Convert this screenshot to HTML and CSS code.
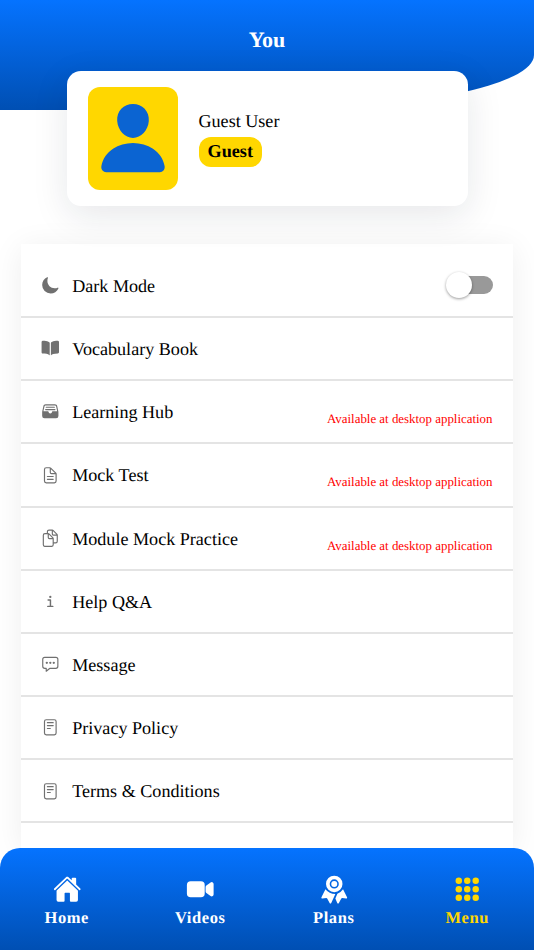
FILE: index.html
```html
<!DOCTYPE html>
<html lang="en">
<head>
<meta charset="utf-8">
<meta name="viewport" content="width=device-width, initial-scale=1">
<title>You</title>
<link rel="stylesheet" href="styles.css">
</head>
<body>
<div class="app">
  <header class="header"><h1 class="title">You</h1></header>
  <section class="profile">
    <div class="avatar">
      <svg viewBox="0 0 512 512"><path d="M332.64 64.58C313.18 43.57 286 32 256 32c-30.16 0-57.43 11.5-76.8 32.38-19.58 21.11-29.12 49.8-26.88 80.78C156.76 206.28 203.27 256 256 256s99.16-49.71 103.67-110.82c2.27-30.7-7.33-59.33-27.03-80.6zM432 480H80a31 31 0 0 1-24.2-11.13c-6.5-7.77-9.12-18.38-7.18-29.11C57.06 392.94 83.4 353.61 124.8 326c36.78-24.51 83.37-38 131.2-38s94.42 13.5 131.2 38c41.4 27.6 67.74 66.93 76.18 113.75 1.94 10.73-.68 21.34-7.18 29.11A31 31 0 0 1 432 480z"/></svg>
    </div>
    <div class="who">
      <div class="name">Guest User</div>
      <div class="badge">Guest</div>
    </div>
  </section>
  <main class="list">
    <div class="row">
      <svg class="icon" viewBox="0 0 512 512"><path d="M264 480A232 232 0 0 1 32 248c0-94 54-178.28 137.61-214.67a16 16 0 0 1 21.06 21.06C181.07 76.43 176 104.66 176 136c0 110.28 89.72 200 200 200 31.34 0 59.57-5.07 81.61-14.67a16 16 0 0 1 21.06 21.06C442.28 426 358 480 264 480Z"/></svg>
      <span class="label">Dark Mode</span>
      <span class="switch"><span class="knob"></span></span>
    </div>
    <div class="row">
      <svg class="icon" viewBox="0 0 512 512"><path d="M202.24 74C166.11 56.75 115.61 48.3 48 48a31.36 31.36 0 0 0-17.92 5.33A32 32 0 0 0 16 79.9V366c0 19.34 13.76 33.93 32 33.93 71.07 0 142.36 6.64 185.06 47a4.11 4.11 0 0 0 6.94-3V106.82a15.89 15.89 0 0 0-5.46-12A143 143 0 0 0 202.24 74Zm279.68-20.7A31.33 31.33 0 0 0 464 48c-67.61.3-118.11 8.71-154.24 26a143.31 143.31 0 0 0-32.31 20.78 15.93 15.93 0 0 0-5.45 12v337.13a3.93 3.93 0 0 0 6.68 2.81c25.67-25.5 70.72-46.82 185.36-46.81a32 32 0 0 0 32-32v-288a32 32 0 0 0-14.12-26.61Z"/></svg>
      <span class="label">Vocabulary Book</span>
    </div>
    <div class="row">
      <svg class="icon" viewBox="0 0 512 512"><path d="M479.66 268.7l-32-151.81C441.48 83.77 417.68 64 384 64H128c-16.8 0-31 4.69-42.1 13.94s-18.37 22.31-21.58 38.89l-32 151.87A16.65 16.65 0 0 0 32 272v112a64 64 0 0 0 64 64h320a64 64 0 0 0 64-64V272a16.65 16.65 0 0 0-.34-3.3Zm-384-145.4v-.28c3.55-18.43 13.81-27 32.29-27H384c18.61 0 28.87 8.55 32.27 26.91 0 .13.05.26.07.39l26.93 127.88a4 4 0 0 1-3.92 4.82H320a15.92 15.92 0 0 0-16 15.82 48 48 0 1 1-96 0A15.92 15.92 0 0 0 192 256H72.65a4 4 0 0 1-3.92-4.82ZM368 160H144a16 16 0 0 1 0-32h224a16 16 0 0 1 0 32Zm16 64H128a16 16 0 0 1 0-32h256a16 16 0 0 1 0 32Z"/></svg>
      <span class="label">Learning Hub</span>
      <span class="note">Available at desktop application</span>
    </div>
    <div class="row">
      <svg class="icon line" viewBox="0 0 512 512"><path d="M416 221.25V416a48 48 0 0 1-48 48H144a48 48 0 0 1-48-48V96a48 48 0 0 1 48-48h98.75a32 32 0 0 1 22.62 9.37l141.26 141.26a32 32 0 0 1 9.37 22.62zM256 56v120a32 32 0 0 0 32 32h120M176 288h160M176 368h160"/></svg>
      <span class="label">Mock Test</span>
      <span class="note">Available at desktop application</span>
    </div>
    <div class="row">
      <svg class="icon line" viewBox="0 0 512 512"><path d="M336 264.13V436c0 24.3-19.05 44-42.95 44H107c-23.95 0-43-19.7-43-44V172a44.26 44.26 0 0 1 44-44h94.12a24.55 24.55 0 0 1 17.49 7.36l109.15 111a25.4 25.4 0 0 1 7.24 17.77zM200 128v108a28.34 28.34 0 0 0 28 28h108M176 128V76a44.26 44.26 0 0 1 44-44h94a24.83 24.83 0 0 1 17.61 7.36l109.15 111A25.09 25.09 0 0 1 448 168v172c0 24.3-19.05 44-42.95 44H344M312 32v108a28.34 28.34 0 0 0 28 28h108"/></svg>
      <span class="label">Module Mock Practice</span>
      <span class="note">Available at desktop application</span>
    </div>
    <div class="row">
      <svg class="icon line info" viewBox="0 0 512 512"><path d="M196 220h64v172M187 396h138"/><circle class="dot" cx="256" cy="136" r="32"/></svg>
      <span class="label">Help Q&amp;A</span>
    </div>
    <div class="row">
      <svg class="icon line" viewBox="0 0 512 512"><path d="M408 64H104a56.16 56.16 0 0 0-56 56v192a56.16 56.16 0 0 0 56 56h40v80l93.72-78.14a8 8 0 0 1 5.13-1.86H408a56.16 56.16 0 0 0 56-56V120a56.16 56.16 0 0 0-56-56z"/><circle class="dot" cx="160" cy="216" r="32"/><circle class="dot" cx="256" cy="216" r="32"/><circle class="dot" cx="352" cy="216" r="32"/></svg>
      <span class="label">Message</span>
    </div>
    <div class="row">
      <svg class="icon line" viewBox="0 0 512 512"><rect x="96" y="48" width="320" height="416" rx="48"/><path d="M176 128h160M176 208h160M176 288h80"/></svg>
      <span class="label">Privacy Policy</span>
    </div>
    <div class="row">
      <svg class="icon line" viewBox="0 0 512 512"><rect x="96" y="48" width="320" height="416" rx="48"/><path d="M176 128h160M176 208h160M176 288h80"/></svg>
      <span class="label">Terms &amp; Conditions</span>
    </div>
  </main>
  <nav class="nav">
    <a class="tab">
      <svg viewBox="0 0 512 512"><path d="M261.56 101.28a8 8 0 0 0-11.06 0L66.4 277.15a8 8 0 0 0-2.47 5.79L63.9 448a32 32 0 0 0 32 32H192a16 16 0 0 0 16-16V328a8 8 0 0 1 8-8h80a8 8 0 0 1 8 8v136a16 16 0 0 0 16 16h96.06a32 32 0 0 0 32-32V282.94a8 8 0 0 0-2.47-5.79Z"/><path d="m490.91 244.15-74.8-71.56V64a16 16 0 0 0-16-16h-48a16 16 0 0 0-16 16v32l-57.92-55.38C272.77 35.14 264.71 32 256 32c-8.68 0-16.72 3.14-22.14 8.63l-212.7 203.5c-6.22 6-7 15.87-1.34 22.37A16 16 0 0 0 43 267.56L250.5 69.28a8 8 0 0 1 11.06 0l207.52 198.28a16 16 0 0 0 22.59-.44c6.14-6.36 5.63-16.86-.76-22.97Z"/></svg>
      <span>Home</span>
    </a>
    <a class="tab">
      <svg viewBox="0 0 512 512"><path d="M464 384.39a32 32 0 0 1-13-2.77 15.77 15.77 0 0 1-2.71-1.54l-82.71-58.22A32 32 0 0 1 352 295.7v-79.4a32 32 0 0 1 13.58-26.16l82.71-58.22a15.77 15.77 0 0 1 2.71-1.54 32 32 0 0 1 45 29.24v192.76a32 32 0 0 1-32 32zM268 400H84a68.07 68.07 0 0 1-68-68V180a68.07 68.07 0 0 1 68-68h184.48A67.6 67.6 0 0 1 336 179.52V332a68.07 68.07 0 0 1-68 68z"/></svg>
      <span>Videos</span>
    </a>
    <a class="tab">
      <svg viewBox="0 0 512 512"><circle cx="256" cy="160" r="54"/><path fill-rule="evenodd" d="M256 12a148 148 0 1 0 0 296a148 148 0 1 0 0-296zM256 78a82 82 0 1 1 0 164a82 82 0 1 1 0-164z"/><path d="M98 256L26 400a16 16 0 0 0 16 23l72-9a16 16 0 0 1 15 8l44 80a16 16 0 0 0 29 0L276 342Q164 340 98 256zM414 256l72 144a16 16 0 0 1-16 23l-72-9a16 16 0 0 0-15 8l-44 80a16 16 0 0 1-29 0L276 420L312 337Q372 316 414 256z"/></svg>
      <span>Plans</span>
    </a>
    <a class="tab active">
      <svg viewBox="0 0 512 512"><circle cx="104" cy="104" r="58"/><circle cx="256" cy="104" r="58"/><circle cx="408" cy="104" r="58"/><circle cx="104" cy="256" r="58"/><circle cx="256" cy="256" r="58"/><circle cx="408" cy="256" r="58"/><circle cx="104" cy="408" r="58"/><circle cx="256" cy="408" r="58"/><circle cx="408" cy="408" r="58"/></svg>
      <span>Menu</span>
    </a>
  </nav>
</div>
</body>
</html>
```
FILE: styles.css
```css
* { box-sizing: border-box; }
body {
  margin: 0;
  background: #fff;
  color: #000;
  font-family: "Liberation Serif", "Times New Roman", serif;
  text-rendering: geometricPrecision;
}
svg { display: block; }
.app {
  height: 950px;
  overflow: hidden;
  display: flex;
  flex-direction: column;
}
.header {
  flex: none;
  height: 110px;
  padding-top: 27px;
  background: linear-gradient(#0573ff, #004fb3);
  border-bottom-right-radius: 50%;
}
.title {
  margin: 0;
  color: #fff;
  font-size: 22px;
  line-height: 25px;
  text-align: center;
}
.profile {
  position: relative;
  flex: none;
  width: 401px;
  height: 134.5px;
  margin: -39px 66px 0 67px;
  padding: 0 21px;
  display: flex;
  align-items: center;
  gap: 20.5px;
  background: #fff;
  border-radius: 14px;
  box-shadow: 0 10px 36px rgba(20, 30, 50, 0.1);
}
.profile::after {
  content: "";
  position: absolute;
  top: 13px;
  right: 0;
  width: 14px;
  height: 100px;
  background: #fff;
}
.avatar {
  width: 90px;
  height: 103px;
  display: flex;
  align-items: center;
  justify-content: center;
  background: #ffd700;
  border-radius: 12px;
}
.avatar svg { width: 78px; height: 78px; fill: #0b64d2; }
.who { display: flex; flex-direction: column; align-items: flex-start; gap: 5px; }
.name { font-size: 18.1px; line-height: 22px; }
.badge {
  padding: 0 9px;
  background: #ffd700;
  border-radius: 12px;
  font-size: 18.2px;
  font-weight: bold;
  line-height: 29.5px;
}
.list {
  flex: 1;
  min-height: 0;
  margin: 38.5px 21px 0;
  padding-top: 10.8px;
  background: #fff;
  box-shadow: 0 4px 30px rgba(0, 0, 0, 0.07);
}
.row {
  height: 63.2px;
  padding: 0 20.5px 0 20px;
  display: flex;
  align-items: center;
  border-bottom: 2px solid #e4e4e4;
}
.icon { width: 18.6px; height: 18.6px; margin-right: 12.6px; fill: #707070; }
.line { fill: none; stroke: #707070; stroke-width: 32; stroke-linecap: round; stroke-linejoin: round; }
.info { stroke-width: 40; }
.dot { fill: #707070; stroke: none; }
.label { font-size: 18.1px; line-height: 22px; padding-top: 1px; }
.note { margin-left: auto; padding-top: 16px; color: #f00; font-size: 12.9px; line-height: 15px; }
.switch {
  width: 41px;
  height: 18px;
  margin-left: auto;
  display: flex;
  align-items: center;
  background: #999;
  border-radius: 9px;
}
.knob {
  width: 26px;
  height: 26px;
  margin-left: -5.5px;
  background: #fff;
  border-radius: 50%;
  box-shadow: 0 1px 3px rgba(0, 0, 0, 0.4);
}
.nav {
  position: relative;
  flex: none;
  height: 102px;
  padding-top: 27px;
  display: grid;
  grid-template-columns: repeat(4, 1fr);
  background: linear-gradient(#0573ff, #004fb3);
  border-radius: 20px 20px 0 0;
}
.nav::before {
  content: "";
  position: absolute;
  inset: 0 21px auto;
  height: 20px;
  z-index: -1;
  background: #fff;
}
.tab {
  display: flex;
  flex-direction: column;
  align-items: center;
  gap: 4.2px;
  color: #fff;
  font-size: 16.5px;
  font-weight: bold;
  letter-spacing: 0.6px;
  line-height: 20px;
}
.tab svg { width: 28.5px; height: 28.5px; fill: currentColor; }
.active { color: #ffd700; }
```
